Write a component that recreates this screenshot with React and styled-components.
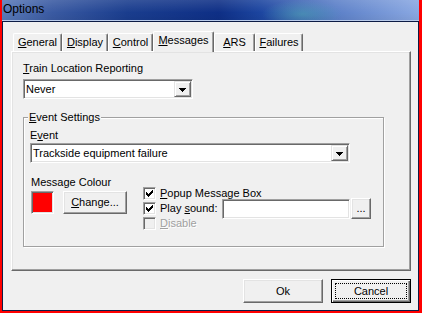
import React from 'react';
import styled, { createGlobalStyle } from 'styled-components';

const Global = createGlobalStyle`
  html, body { margin: 0; padding: 0; background: #fff; }
  body { font-family: "Liberation Sans", Arial, sans-serif; font-size: 11px; color: #000; }
  * { box-sizing: border-box; }
`;

const Frame = styled.div`
  width: 422px;
  height: 313px;
  border-left: 2px solid #ff0000;
  border-right: 3px solid #ff0000;
  border-bottom: 2px solid #ff0000;
  display: flex;
  flex-direction: column;
  background: #f0f0f0;
`;

const TitleBar = styled.div`
  height: 21px;
  flex: none;
  padding: 2px 0 0 1px;
  font-size: 12px;
  line-height: 14px;
  color: #000;
  background:
    linear-gradient(to bottom, rgba(255,255,255,0.12), rgba(255,255,255,0) 60%, rgba(0,0,0,0.05)),
    radial-gradient(ellipse 40px 14px at 300px 14px, rgba(80,170,180,0.55), rgba(80,170,180,0)),
    linear-gradient(to right, #5a7ab8 0%, #3a5aa2 12%, #1a3d8e 30%, #0e2f86 52%, #1c45a0 62%, #5c80c8 80%, #8aa8e2 100%);
  box-shadow: inset 0 -1px 0 #b9cbea;
`;

const Client = styled.div`
  flex: 1;
  border: 1px solid #0d1c45;
  display: flex;
  flex-direction: column;
  padding: 9px 7px 7px 8px;
`;

const TabStrip = styled.div`
  display: flex;
  align-items: flex-end;
  height: 20px;
  padding-left: 2px;
  position: relative;
  z-index: 1;
`;

const Tab = styled.div`
  width: ${p => p.$w}px;
  height: ${p => (p.$active ? 21 : 18)}px;
  margin-bottom: ${p => (p.$active ? -1 : 0)}px;
  border-top: 1px solid #fff;
  border-left: 1px solid #fff;
  border-right: 1px solid #696969;
  border-radius: 2px 2px 0 0;
  box-shadow: inset -1px 0 0 #a0a0a0;
  background: #f0f0f0;
  text-align: center;
  padding-top: 1px;
  line-height: 14px;
  white-space: nowrap;
`;

const Panel = styled.div`
  width: 400px;
  height: 220px;
  flex: none;
  border: 1px solid;
  border-color: #fff #696969 #696969 #fff;
  box-shadow: inset -1px -1px 0 #a0a0a0, inset 1px 1px 0 #e3e3e3;
  padding: 10px 0 0 11px;
  display: flex;
  flex-direction: column;
  align-items: flex-start;
`;

const Label = styled.div`
  line-height: 13px;
  height: 13px;
  white-space: nowrap;
  color: ${p => (p.$disabled ? '#a0a0a0' : '#000')};
  text-shadow: ${p => (p.$disabled ? '1px 1px 0 #fff' : 'none')};
  width: ${p => (p.$w ? `${p.$w}px` : 'auto')};
  flex: none;
`;

const Combo = styled.div`
  width: ${p => p.$w}px;
  height: 20px;
  margin-top: ${p => p.$mt}px;
  border: 1px solid;
  border-color: #a0a0a0 #fff #fff #a0a0a0;
  box-shadow: inset 1px 1px 0 #696969, inset -1px -1px 0 #e3e3e3;
  background: #fff;
  display: flex;
  align-items: center;
  padding: 1px;
`;

const ComboText = styled.span`
  flex: 1;
  padding-left: 1px;
  line-height: 16px;
  white-space: nowrap;
`;

const DropButton = styled.div`
  width: 17px;
  height: 16px;
  background: #f0f0f0;
  border: 1px solid;
  border-color: #e3e3e3 #696969 #696969 #e3e3e3;
  box-shadow: inset 1px 1px 0 #fff, inset -1px -1px 0 #a0a0a0;
  display: flex;
  align-items: center;
  justify-content: center;
  padding-top: 1px;
`;

const Group = styled.div`
  position: relative;
  width: 361px;
  height: 130px;
  margin-top: 18px;
  border: 1px solid #a0a0a0;
  box-shadow: inset 1px 1px 0 #fff, 1px 1px 0 #fff;
  padding: 11px 0 0 6px;
  display: flex;
  flex-direction: column;
  align-items: flex-start;
`;

const Legend = styled.div`
  position: absolute;
  top: -7px;
  left: 4px;
  padding: 0 1px;
  background: #f0f0f0;
  line-height: 13px;
`;

const ColourRow = styled.div`
  display: flex;
  align-items: flex-start;
  margin-top: 13px;
  margin-left: 1px;
`;

const LeftCol = styled.div`
  width: 112px;
  display: flex;
  flex-direction: column;
`;

const SwatchRow = styled.div`
  display: flex;
  gap: 9px;
  margin-top: 2px;
`;

const Swatch = styled.div`
  width: 23px;
  height: 23px;
  background: ${p => p.$color};
  border: 1px solid;
  border-color: #a0a0a0 #fff #fff #a0a0a0;
  box-shadow: inset 1px 1px 0 #696969, inset -1px -1px 0 #e3e3e3;
`;

const Button = styled.button`
  width: ${p => p.$w}px;
  height: ${p => p.$h}px;
  margin: 0;
  padding: 0;
  font: inherit;
  font-size: 11px;
  line-height: 13px;
  color: #000;
  background: #f0f0f0;
  border: 1px solid;
  border-color: ${p => (p.$default ? '#000' : '#fff #696969 #696969 #fff')};
  box-shadow: ${p =>
    p.$default
      ? 'inset 1px 1px 0 #fff, inset -1px -1px 0 #696969, inset -2px -2px 0 #a0a0a0'
      : 'inset -1px -1px 0 #a0a0a0, inset 1px 1px 0 #e3e3e3'};
  outline: ${p => (p.$default ? '1px dotted #000' : 'none')};
  outline-offset: -5px;
  flex: none;
`;

const RightCol = styled.div`
  margin-top: 10px;
  display: flex;
  flex-direction: column;
`;

const CheckRow = styled.div`
  height: 15px;
  display: flex;
  align-items: center;
`;

const Box = styled.div`
  width: 13px;
  height: 13px;
  flex: none;
  margin-right: 4px;
  border: 1px solid;
  border-color: #a0a0a0 #fff #fff #a0a0a0;
  box-shadow: inset 1px 1px 0 #696969, inset -1px -1px 0 #e3e3e3;
  background: ${p => (p.$disabled ? '#f0f0f0' : '#fff')};
  display: flex;
  align-items: center;
  justify-content: center;
`;

const Field = styled.div`
  width: 128px;
  height: 20px;
  flex: none;
  border: 1px solid;
  border-color: #a0a0a0 #fff #fff #a0a0a0;
  box-shadow: inset 1px 1px 0 #696969, inset -1px -1px 0 #e3e3e3;
  background: #fff;
`;

const ButtonRow = styled.div`
  display: flex;
  justify-content: flex-end;
  gap: 8px;
  margin-top: 8px;
`;

const Check = () => (
  <svg width="7" height="7" viewBox="0 0 7 7" shapeRendering="crispEdges">
    <path d="M6 0h1v3h-1v1h-1v1h-1v1h-1v1h-1v-1h-1v-1h-1v-3h1v1h1v1h1v-1h1v-1h1z" fill="#000" />
  </svg>
);

const Arrow = () => (
  <svg width="7" height="4" viewBox="0 0 7 4" shapeRendering="crispEdges">
    <path d="M0 0h7v1h-1v1h-1v1h-1v1h-1v-1h-1v-1h-1v-1h-1z" fill="#000" />
  </svg>
);

const CheckItem = ({ checked, disabled, children }) => (
  <>
    <Box $disabled={disabled}>{checked && <Check />}</Box>
    {children}
  </>
);

const tabs = [
  { k: 'G', rest: 'eneral', w: 49 },
  { k: 'D', rest: 'isplay', w: 46 },
  { k: 'C', rest: 'ontrol', w: 45 },
  { k: 'M', rest: 'essages', w: 61, active: true },
  { k: 'A', rest: 'RS', w: 41 },
  { k: 'F', rest: 'ailures', w: 48 },
];

export default function App() {
  return (
    <>
      <Global />
      <Frame>
        <TitleBar>Options</TitleBar>
        <Client>
          <TabStrip>
            {tabs.map(t => (
              <Tab key={t.k} $w={t.w} $active={t.active}>
                <u>{t.k}</u>
                {t.rest}
              </Tab>
            ))}
          </TabStrip>
          <Panel>
            <Label>
              <u>T</u>rain Location Reporting
            </Label>
            <Combo $w={170} $mt={4}>
              <ComboText>Never</ComboText>
              <DropButton>
                <Arrow />
              </DropButton>
            </Combo>
            <Group>
              <Legend>
                <u>E</u>vent Settings
              </Legend>
              <Label>
                E<u>v</u>ent
              </Label>
              <Combo $w={320} $mt={1}>
                <ComboText>Trackside equipment failure</ComboText>
                <DropButton>
                  <Arrow />
                </DropButton>
              </Combo>
              <ColourRow>
                <LeftCol>
                  <Label>Message Colour</Label>
                  <SwatchRow>
                    <Swatch $color="#ff0000" />
                    <Button $w={64} $h={23}>
                      <u>C</u>hange...
                    </Button>
                  </SwatchRow>
                </LeftCol>
                <RightCol>
                  <CheckRow>
                    <CheckItem checked>
                      <Label>
                        <u>P</u>opup Message Box
                      </Label>
                    </CheckItem>
                  </CheckRow>
                  <CheckRow>
                    <CheckItem checked>
                      <Label $w={62}>
                        Play <u>s</u>ound:
                      </Label>
                    </CheckItem>
                    <Field />
                    <Button $w={20} $h={21} style={{ marginLeft: 1 }}>...</Button>
                  </CheckRow>
                  <CheckRow>
                    <CheckItem disabled>
                      <Label $disabled>
                        <u>D</u>isable
                      </Label>
                    </CheckItem>
                  </CheckRow>
                </RightCol>
              </ColourRow>
            </Group>
          </Panel>
          <ButtonRow>
            <Button $w={80} $h={24}>Ok</Button>
            <Button $w={80} $h={24} $default>Cancel</Button>
          </ButtonRow>
        </Client>
      </Frame>
    </>
  );
}
